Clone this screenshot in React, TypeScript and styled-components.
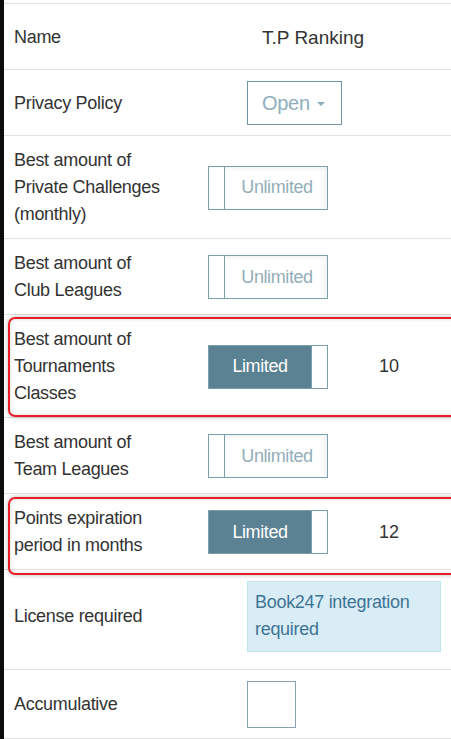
import React from 'react';
import styled, { createGlobalStyle } from 'styled-components';

const GlobalStyle = createGlobalStyle`
  html, body {
    margin: 0;
    padding: 0;
    background: #ffffff;
    overflow-x: hidden;
  }
  body {
    font-family: 'Liberation Sans', Arial, sans-serif;
    color: #333333;
  }
`;

const Page = styled.div`
  min-height: 100vh;
  border-left: 4px solid #0c0c0c;
  padding-top: 3px;
  box-sizing: border-box;
  overflow: hidden;
`;

const Table = styled.div`
  border-top: 1px solid #e2e2e2;
`;

const Row = styled.div<{ $padBottom?: number }>`
  position: relative;
  display: grid;
  grid-template-columns: 204px 1fr;
  align-items: center;
  min-height: 66px;
  box-sizing: border-box;
  padding: 11px 0 ${(p) => p.$padBottom ?? 10}px;
  border-bottom: 1px solid #e2e2e2;
`;

const Label = styled.div`
  padding-left: 10px;
  font-size: 18px;
  line-height: 27px;
  letter-spacing: -0.3px;
  color: #333333;
`;

const Value = styled.div<{ $indent: number }>`
  display: flex;
  align-items: center;
  padding-left: ${(p) => p.$indent}px;
`;

const HeaderText = styled.div`
  font-size: 19px;
  line-height: 27px;
  color: #333333;
`;

const Highlight = styled.div<{ $top: number; $bottom: number }>`
  position: absolute;
  left: 4px;
  right: -12px;
  top: ${(p) => p.$top}px;
  bottom: ${(p) => p.$bottom}px;
  border: 2px solid #ea1d26;
  border-radius: 7px;
  box-shadow: 0 0 5px rgba(0, 0, 0, 0.28), inset 0 0 5px rgba(0, 0, 0, 0.14);
  pointer-events: none;
  z-index: 2;
`;

const DropButton = styled.div`
  display: flex;
  align-items: center;
  gap: 7px;
  width: 95px;
  height: 44px;
  box-sizing: border-box;
  padding-left: 14px;
  border: 1px solid #6e95a5;
  font-size: 20px;
  letter-spacing: -0.3px;
  color: #8eaebb;
`;

const Caret = styled.span`
  width: 0;
  height: 0;
  border-left: 4px solid transparent;
  border-right: 4px solid transparent;
  border-top: 4px solid #8eaebb;
  margin-top: 2px;
`;

const Toggle = styled.div<{ $on: boolean }>`
  display: flex;
  flex-direction: ${(p) => (p.$on ? 'row' : 'row-reverse')};
  width: 120px;
  height: 44px;
  box-sizing: border-box;
  border: 1px solid #7b9fad;
  box-shadow: ${(p) => (p.$on ? 'none' : 'inset -2px 2px 4px rgba(0,0,0,0.06)')};
`;

const ToggleLabel = styled.div<{ $on: boolean }>`
  flex: 1;
  display: flex;
  align-items: center;
  justify-content: center;
  font-size: 18px;
  letter-spacing: -0.4px;
  background: ${(p) => (p.$on ? '#5b8292' : 'transparent')};
  color: ${(p) => (p.$on ? '#ffffff' : '#93aeb9')};
  padding-left: ${(p) => (p.$on ? 0 : 2)}px;
`;

const ToggleHandle = styled.div<{ $on: boolean }>`
  width: 15px;
  background: #ffffff;
  border-left: ${(p) => (p.$on ? '1px solid #7b9fad' : 'none')};
  border-right: ${(p) => (p.$on ? 'none' : '1px solid #7b9fad')};
`;

const Count = styled.div`
  margin-left: 51px;
  font-size: 18px;
  color: #333333;
`;

const InfoBox = styled.div`
  width: 194px;
  box-sizing: border-box;
  padding: 7px 7px 8px;
  background: #d9edf7;
  border: 1px solid #bfe3f0;
  color: #3f7494;
  font-size: 18px;
  line-height: 27px;
  letter-spacing: -0.3px;
`;

const Checkbox = styled.div`
  width: 49px;
  height: 47px;
  box-sizing: border-box;
  border: 1px solid #87a3af;
  background: #ffffff;
`;

function LimitToggle({ on }: { on: boolean }) {
  return (
    <Toggle $on={on}>
      <ToggleLabel $on={on}>{on ? 'Limited' : 'Unlimited'}</ToggleLabel>
      <ToggleHandle $on={on} />
    </Toggle>
  );
}

type Item = {
  label: React.ReactNode;
  limit?: number;
  highlight?: [number, number];
};

const limits: Item[] = [
  {
    label: (
      <>
        Best amount of
        <br />
        Private Challenges
        <br />
        (monthly)
      </>
    ),
  },
  {
    label: (
      <>
        Best amount of
        <br />
        Club Leagues
      </>
    ),
  },
  {
    label: (
      <>
        Best amount of
        <br />
        Tournaments
        <br />
        Classes
      </>
    ),
    limit: 10,
    highlight: [2, 0],
  },
  {
    label: (
      <>
        Best amount of
        <br />
        Team Leagues
      </>
    ),
  },
  {
    label: (
      <>
        Points expiration
        <br />
        period in months
      </>
    ),
    limit: 12,
    highlight: [3, -6],
  },
];

export default function App() {
  return (
    <>
      <GlobalStyle />
      <Page>
        <Table>
          <Row>
            <Label>Name</Label>
            <Value $indent={54}>
              <HeaderText>T.P Ranking</HeaderText>
            </Value>
          </Row>
          <Row>
            <Label>Privacy Policy</Label>
            <Value $indent={39}>
              <DropButton>
                Open
                <Caret />
              </DropButton>
            </Value>
          </Row>
          {limits.map((item, idx) => (
            <Row key={idx}>
              {item.highlight && (
                <Highlight $top={item.highlight[0]} $bottom={item.highlight[1]} />
              )}
              <Label>{item.label}</Label>
              <Value $indent={0}>
                <LimitToggle on={item.limit !== undefined} />
                {item.limit !== undefined && <Count>{item.limit}</Count>}
              </Value>
            </Row>
          ))}
          <Row $padBottom={17}>
            <Label>License required</Label>
            <Value $indent={39}>
              <InfoBox>
                Book247 integration
                <br />
                required
              </InfoBox>
            </Value>
          </Row>
          <Row>
            <Label>Accumulative</Label>
            <Value $indent={39}>
              <Checkbox />
            </Value>
          </Row>
        </Table>
      </Page>
    </>
  );
}
